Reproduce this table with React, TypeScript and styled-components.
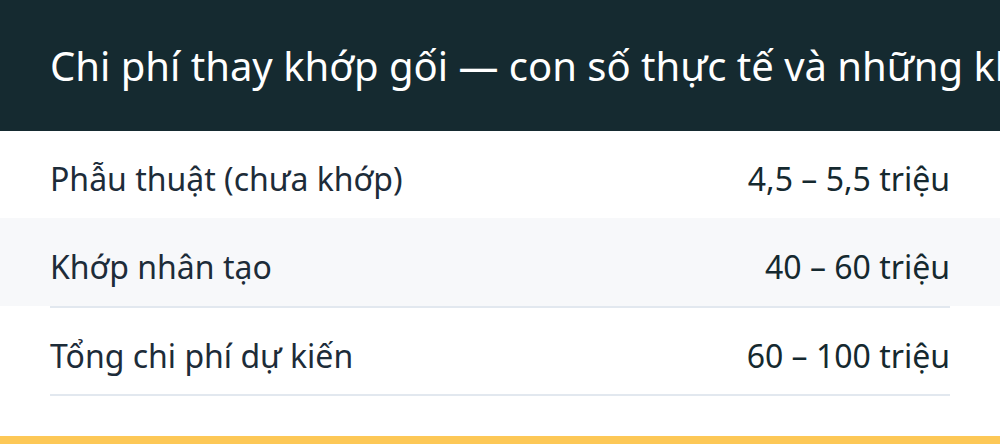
import styled, { createGlobalStyle } from 'styled-components';

const GlobalStyle = createGlobalStyle`
    html, body {
        margin: 0;
        padding: 0;
        background: #ffffff;
    }
    body {
        font-family: 'Noto Sans', 'Open Sans', sans-serif;
    }
`;

const CostCard = styled.section`
    width: 1000px;
    height: 444px;
    overflow: hidden;
    display: flex;
    flex-direction: column;
    background: #ffffff;
`;

const CardHeader = styled.header`
    height: 131px;
    flex-shrink: 0;
    display: flex;
    align-items: center;
    padding: 0 50px;
    background: #152a30;
    overflow: hidden;

    h2 {
        margin: 0;
        font-size: 40px;
        font-weight: 400;
        color: #ffffff;
        white-space: nowrap;
    }
`;

const CostRow = styled.div<{ $shaded?: boolean; $height: number }>`
    height: ${p => p.$height}px;
    display: flex;
    align-items: center;
    justify-content: space-between;
    padding: 8px 50px 0;
    box-sizing: border-box;
    background: ${p => (p.$shaded ? '#f7f8fa' : '#ffffff')};
    font-size: 32px;
`;

const Label = styled.span`
    color: #1d2c39;
`;

const Value = styled.span`
    color: #15292f;
    text-align: right;
`;

const Divider = styled.div`
    height: 2px;
    margin: 0 50px;
    background: #e2e8ef;
`;

const Filler = styled.div`
    flex: 1;
`;

const AccentBar = styled.div`
    height: 8px;
    flex-shrink: 0;
    background: #fdc857;
`;

const rows = [
    { label: 'Phẫu thuật (chưa khớp)', value: '4,5 – 5,5 triệu', shaded: false, divider: false, height: 87 },
    { label: 'Khớp nhân tạo', value: '40 – 60 triệu', shaded: true, divider: true, height: 88 },
    { label: 'Tổng chi phí dự kiến', value: '60 – 100 triệu', shaded: false, divider: true, height: 86 },
];

const App = () => {
    return (
        <>
            <GlobalStyle />
            <CostCard>
                <CardHeader>
                    <h2>Chi phí thay khớp gối — con số thực tế và những khoản cần biết</h2>
                </CardHeader>
                {rows.map(row => (
                    <div key={row.label}>
                        <CostRow $shaded={row.shaded} $height={row.height}>
                            <Label>{row.label}</Label>
                            <Value>{row.value}</Value>
                        </CostRow>
                        {row.divider && <Divider />}
                    </div>
                ))}
                <Filler />
                <AccentBar />
            </CostCard>
        </>
    );
};

export default App;
